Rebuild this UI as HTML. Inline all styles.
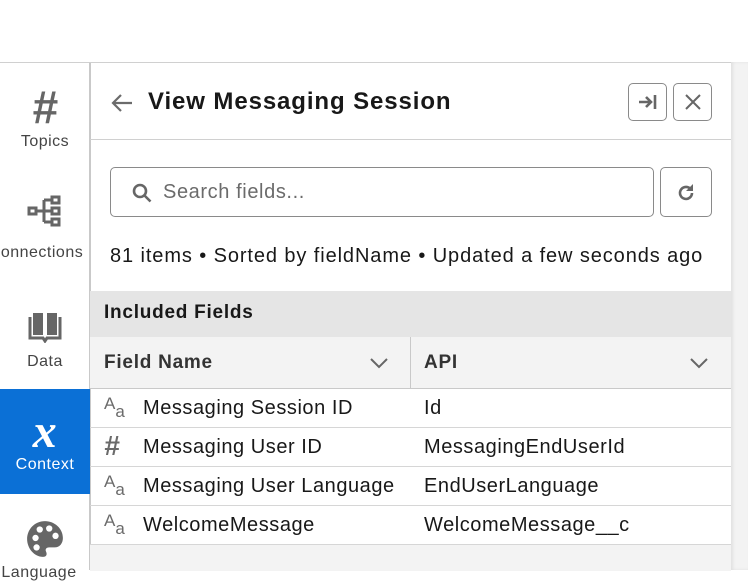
<!DOCTYPE html><html><head><style>
*{box-sizing:border-box;margin:0;padding:0}
body{width:748px;height:570px;overflow:hidden;background:#fff;font-family:"Liberation Sans",Helvetica,Arial,sans-serif;position:relative;color:#181818;letter-spacing:0.75px}
.abs{position:absolute}
.side{left:0;top:62px;width:90px;height:508px;border-right:1px solid #c9c9c9;border-top:1px solid #d0d0d0}
.nav{position:absolute;left:0;width:90px;text-align:center;font-size:16px;color:#444;letter-spacing:0.5px}
.panel{left:90px;top:62px;width:641px;height:508px;border-top:1px solid #d0d0d0;background:#fff}
.btn{position:absolute;border:1px solid #8a8a8a;border-radius:5px;background:#fff}
.row{position:absolute;left:0;width:641px;height:39px;border-bottom:1px solid #d6d6d6;font-size:20px;color:#181818;letter-spacing:0.55px}
.row span{position:absolute;top:8px;white-space:nowrap}
.aa{position:absolute;left:14px;top:5px;font-size:17px;color:#6b6b6b;letter-spacing:0}
.aa b{font-weight:normal;position:relative;top:8px;font-size:17px}
</style></head><body>
<div class="abs" style="left:0;top:62px;width:748px;height:1px;background:#d0d0d0"></div>
<div class="abs" style="left:731px;top:62px;width:17px;height:508px;background:#f3f3f3;box-shadow:inset 2px 0 3px rgba(0,0,0,.08)"></div>
<div class="abs side">
 <div class="nav" style="top:24px"><div style="font-size:46px;font-weight:bold;font-style:italic;color:#666;line-height:40px">#</div><div style="margin-top:6px">Topics</div></div>
 <div class="nav" style="top:130px"><svg width="36" height="36" viewBox="0 0 36 36" fill="none" stroke="#666" stroke-width="3"><rect x="2" y="15" width="7" height="6"/><rect x="25" y="4" width="7" height="6"/><rect x="25" y="15" width="7" height="6"/><rect x="25" y="26" width="7" height="6"/><path d="M9 18h8M17 7v22M17 7h8M17 18h8M17 29h8"/></svg><div style="margin-top:10px;margin-left:-18px;white-space:nowrap">Connections</div></div>
 <div class="nav" style="top:248px"><svg width="40" height="32" viewBox="0 0 40 32"><rect x="8" y="2" width="10" height="22" fill="#666"/><rect x="22" y="2" width="10" height="22" fill="#666"/><path d="M5 6v21h13l2 3 2-3h13V6" stroke="#666" stroke-width="3" fill="none"/></svg><div style="margin-top:5px">Data</div></div>
 <div class="abs" style="left:0;top:326px;width:90px;height:105px;background:#0b70d6"></div>
 <div class="nav" style="top:350px;color:#fff"><div style="font-family:'Liberation Serif',serif;font-style:italic;font-weight:bold;font-size:48px;line-height:38px">x</div><div style="margin-top:5px">Context</div></div>
 <div class="nav" style="top:456px"><svg width="40" height="40" viewBox="0 0 38 38"><path d="M19 2C9 2 2 10 2 19s7 17 15 17c4 0 4-3 3-5s0-4 3-4h5c5 0 8-4 8-9C36 9 28 2 19 2z" fill="#666"/><circle cx="10" cy="18" r="3" fill="#fff"/><circle cx="14" cy="10" r="3" fill="#fff"/><circle cx="23" cy="9" r="3" fill="#fff"/><circle cx="29" cy="16" r="3" fill="#fff"/><circle cx="11" cy="27" r="3" fill="#fff"/></svg><div style="margin-left:-12px;white-space:nowrap">Language</div></div>
</div>
<div class="abs panel">
 <div class="abs" style="left:0;top:0;width:1px;height:508px;background:#c9c9c9"></div>
 <svg class="abs" style="left:20px;top:30px" width="24" height="20" viewBox="0 0 24 20" fill="none" stroke="#6b6b6b" stroke-width="2.2"><path d="M22 10H3M11 2L3 10l8 8"/></svg>
 <div class="abs" style="left:58px;top:25px;font-size:24px;font-weight:bold;color:#181818;letter-spacing:0.9px;white-space:nowrap">View Messaging Session</div>
 <div class="btn" style="left:538px;top:20px;width:39px;height:38px"><svg style="position:absolute;left:9px;top:10px" width="20" height="16" viewBox="0 0 20 16" fill="none" stroke="#666" stroke-width="2.6"><path d="M1 8h12M8 3l5 5-5 5M17 1v14"/></svg></div>
 <div class="btn" style="left:583px;top:20px;width:39px;height:38px"><svg style="position:absolute;left:10px;top:9px" width="18" height="18" viewBox="0 0 18 18" stroke="#666" stroke-width="2"><path d="M2 2l14 14M16 2L2 16"/></svg></div>
 <div class="abs" style="left:0;top:76px;width:641px;height:1px;background:#d0d0d0"></div>
 <div class="btn" style="left:20px;top:104px;width:544px;height:50px"><svg style="position:absolute;left:20px;top:14px" width="22" height="22" viewBox="0 0 22 22" fill="none" stroke="#666" stroke-width="2.6"><circle cx="9" cy="9" r="6"/><path d="M13.5 13.5l6 6"/></svg><div style="position:absolute;left:52px;top:13px;font-size:20px;color:#6b6b6b;letter-spacing:0.6px">Search fields...</div></div>
 <div class="btn" style="left:570px;top:104px;width:52px;height:50px"><svg style="position:absolute;left:15px;top:15px" width="20" height="20" viewBox="0 0 20 20" fill="none" stroke="#666" stroke-width="2.6"><path d="M16 10a6 6 0 1 1-2-4.5"/><polygon points="17,1 17,8 10,8" fill="#666" stroke="none"/></svg></div>
 <div class="abs" style="left:20px;top:182px;font-size:20px;color:#181818;white-space:nowrap;letter-spacing:0.9px">81 items • Sorted by fieldName • Updated a few seconds ago</div>
 <div class="abs" style="left:0;top:228px;width:641px;height:46px;background:#e5e5e5"><div style="position:absolute;left:14px;top:11px;font-size:19px;font-weight:bold">Included Fields</div></div>
 <div class="abs" style="left:0;top:274px;width:641px;height:52px;background:#f3f3f3;border-bottom:1px solid #c9c9c9">
  <div style="position:absolute;left:14px;top:15px;font-size:19px;font-weight:bold;color:#333">Field Name</div>
  <svg style="position:absolute;left:280px;top:20px" width="18" height="12" viewBox="0 0 18 12" fill="none" stroke="#666" stroke-width="2"><path d="M1 2l8 8 8-8"/></svg>
  <div style="position:absolute;left:320px;top:0;width:1px;height:52px;background:#c9c9c9"></div>
  <div style="position:absolute;left:334px;top:15px;font-size:19px;font-weight:bold;color:#333">API</div>
  <svg style="position:absolute;left:600px;top:20px" width="18" height="12" viewBox="0 0 18 12" fill="none" stroke="#666" stroke-width="2"><path d="M1 2l8 8 8-8"/></svg>
 </div>
 <div class="row" style="top:326px"><div class="aa">A<b>a</b></div><span style="left:53px">Messaging Session ID</span><span style="left:334px">Id</span></div>
 <div class="row" style="top:365px"><div class="aa" style="font-size:28px;font-weight:bold;font-style:italic;top:2px">#</div><span style="left:53px">Messaging User ID</span><span style="left:334px">MessagingEndUserId</span></div>
 <div class="row" style="top:404px"><div class="aa">A<b>a</b></div><span style="left:53px">Messaging User Language</span><span style="left:334px">EndUserLanguage</span></div>
 <div class="row" style="top:443px"><div class="aa">A<b>a</b></div><span style="left:53px">WelcomeMessage</span><span style="left:334px">WelcomeMessage__c</span></div>
 <div class="abs" style="left:0;top:482px;width:641px;height:26px;background:#f3f3f3"></div>
</div>
</body></html>
